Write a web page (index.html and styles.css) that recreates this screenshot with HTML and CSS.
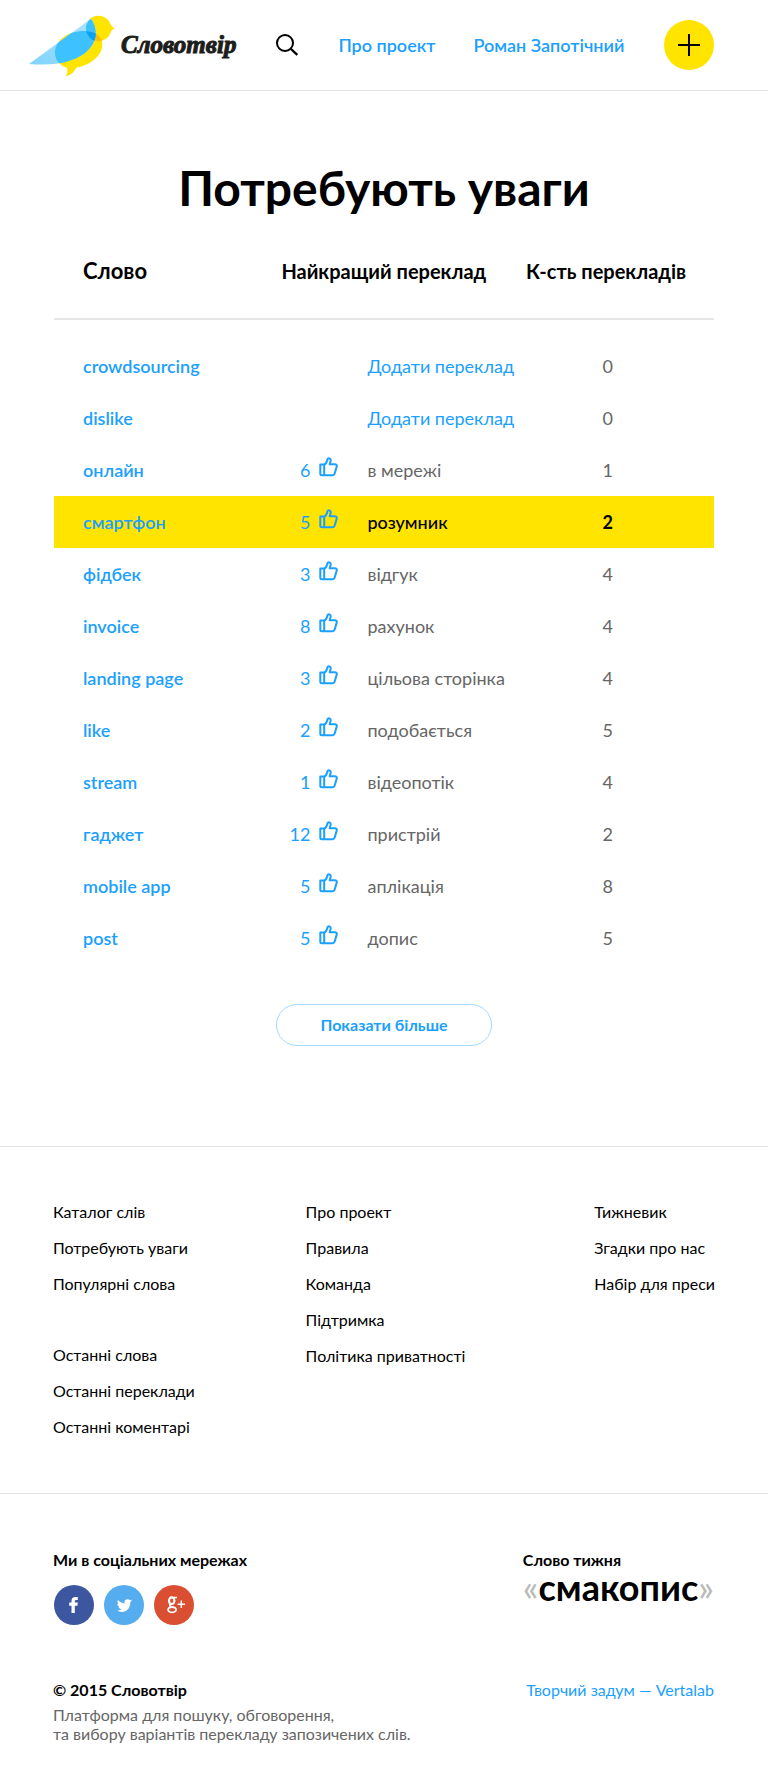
FILE: index.html
```
<!DOCTYPE html>
<html lang="uk">
<head>
<meta charset="utf-8">
<meta name="viewport" content="width=device-width, initial-scale=1">
<title>Потребують уваги — Словотвір</title>
<link rel="stylesheet" href="styles.css">
</head>
<body>
<svg class="sprite" aria-hidden="true">
  <symbol id="like" viewBox="0 0 20 20">
    <path d="M2.300 7.500h3.900v10.700H3.800a1.500 1.500 0 0 1-1.500-1.500zM6.200 8C8.500 6.500 9.200 4 9.700 1.800c1.700-1.200 3.500.200 2.900 2.300L11.700 7.300h5.100c1.500 0 2.300 1 1.900 2.300l-2 6.900c-.300 1.100-1 1.700-2.100 1.700H6.200" fill="none" stroke="currentColor" stroke-width="2" stroke-linejoin="round"/>
  </symbol>
</svg>

<header class="header">
  <a class="logo" href="#">
    <svg class="bird" width="88" height="62" viewBox="28 14 88 62" aria-hidden="true">
      <defs>
        <clipPath id="bodyClip"><path d="M55 53C55 40 68 31 84 31C92 31 102 34 102.300 44C102.500 57 88 66 76 67.700C75 71 71 75.500 65.700 76C68 73 67.500 70 66.700 67.500C60 66 55 60 55 53Z"/></clipPath>
        <clipPath id="headClip"><circle cx="98.700" cy="28.500" r="12.800"/></clipPath>
        <linearGradient id="wingFill" x1="0" x2="1" y1="1" y2="0"><stop offset="0" stop-color="#80d4ff"/><stop offset="1" stop-color="#aee4ff"/></linearGradient>
      </defs>
      <path d="M55 53C55 40 68 31 84 31C92 31 102 34 102.300 44C102.500 57 88 66 76 67.700C75 71 71 75.500 65.700 76C68 73 67.500 70 66.700 67.500C60 66 55 60 55 53Z" fill="#ffe400"/>
      <path d="M98.700 15.700c5.500 0 10.300 3.600 12 8.800 1 1.800 2.200 3 4.300 4-2.100.800-3.400 1.400-4.200 3.400A12.800 12.800 0 1 1 98.700 15.700Z" fill="#ffe400"/>
      <circle cx="98.700" cy="28.500" r="12.800" fill="#ffbd00" clip-path="url(#bodyClip)"/>
      <path d="M29 64L91 18.700C97 27 98 39 90 48C80 60 60 66.500 29 64Z" fill="url(#wingFill)"/>
      <path d="M29 64L91 18.700C97 27 98 39 90 48C80 60 60 66.500 29 64Z" fill="#3dc1ff" clip-path="url(#bodyClip)"/>
      <path d="M29 64L91 18.700C97 27 98 39 90 48C80 60 60 66.500 29 64Z" fill="#3dc1fa" clip-path="url(#headClip)"/>
      <g clip-path="url(#bodyClip)"><path d="M29 64L91 18.700C97 27 98 39 90 48C80 60 60 66.500 29 64Z" fill="#0aa3f0" clip-path="url(#headClip)"/></g>
    </svg>
    <span class="wordmark">Словотвір</span>
  </a>
  <button class="search" type="button" aria-label="Пошук">
    <svg width="22" height="22" viewBox="0 0 22 22" aria-hidden="true"><circle cx="9" cy="9" r="8" fill="none" stroke="#000" stroke-width="2"/><path d="M15 15l6.300 6" stroke="#000" stroke-width="2.400"/></svg>
  </button>
  <nav class="nav">
    <a href="#">Про проект</a>
    <a href="#">Роман Запотічний</a>
  </nav>
  <button class="add" type="button" aria-label="Додати слово">
    <svg width="22" height="22" viewBox="0 0 22 22" aria-hidden="true"><path d="M11 0v22M0 11h22" stroke="#000" stroke-width="2"/></svg>
  </button>
</header>

<main class="main">
  <h1>Потребують уваги</h1>
  <table class="words">
    <colgroup><col class="c-word"><col class="c-votes"><col class="c-best"><col class="c-count"></colgroup>
    <thead>
      <tr><th class="word-head" scope="col">Слово</th><th class="best-head" colspan="2" scope="colgroup">Найкращий переклад</th><th scope="col">К-сть перекладів</th></tr>
    </thead>
    <tbody>
      <tr><td><a class="word" href="#">crowdsourcing</a></td><td></td><td><a href="#">Додати переклад</a></td><td class="count">0</td></tr>
      <tr><td><a class="word" href="#">dislike</a></td><td></td><td><a href="#">Додати переклад</a></td><td class="count">0</td></tr>
      <tr><td><a class="word" href="#">онлайн</a></td><td><button class="vote" type="button">6<svg class="like"><use href="#like"/></svg></button></td><td>в мережі</td><td class="count">1</td></tr>
      <tr class="active"><td><a class="word" href="#">смартфон</a></td><td><button class="vote" type="button">5<svg class="like"><use href="#like"/></svg></button></td><td>розумник</td><td class="count">2</td></tr>
      <tr><td><a class="word" href="#">фідбек</a></td><td><button class="vote" type="button">3<svg class="like"><use href="#like"/></svg></button></td><td>відгук</td><td class="count">4</td></tr>
      <tr><td><a class="word" href="#">invoice</a></td><td><button class="vote" type="button">8<svg class="like"><use href="#like"/></svg></button></td><td>рахунок</td><td class="count">4</td></tr>
      <tr><td><a class="word" href="#">landing page</a></td><td><button class="vote" type="button">3<svg class="like"><use href="#like"/></svg></button></td><td>цільова сторінка</td><td class="count">4</td></tr>
      <tr><td><a class="word" href="#">like</a></td><td><button class="vote" type="button">2<svg class="like"><use href="#like"/></svg></button></td><td>подобається</td><td class="count">5</td></tr>
      <tr><td><a class="word" href="#">stream</a></td><td><button class="vote" type="button">1<svg class="like"><use href="#like"/></svg></button></td><td>відеопотік</td><td class="count">4</td></tr>
      <tr><td><a class="word" href="#">гаджет</a></td><td><button class="vote" type="button">12<svg class="like"><use href="#like"/></svg></button></td><td>пристрій</td><td class="count">2</td></tr>
      <tr><td><a class="word" href="#">mobile app</a></td><td><button class="vote" type="button">5<svg class="like"><use href="#like"/></svg></button></td><td>аплікація</td><td class="count">8</td></tr>
      <tr><td><a class="word" href="#">post</a></td><td><button class="vote" type="button">5<svg class="like"><use href="#like"/></svg></button></td><td>допис</td><td class="count">5</td></tr>
    </tbody>
  </table>
  <button class="more" type="button">Показати більше</button>
</main>

<footer>
  <nav class="links">
    <div class="column">
      <ul>
        <li><a href="#">Каталог слів</a></li>
        <li><a href="#">Потребують уваги</a></li>
        <li><a href="#">Популярні слова</a></li>
      </ul>
      <ul>
        <li><a href="#">Останні слова</a></li>
        <li><a href="#">Останні переклади</a></li>
        <li><a href="#">Останні коментарі</a></li>
      </ul>
    </div>
    <ul>
      <li><a href="#">Про проект</a></li>
      <li><a href="#">Правила</a></li>
      <li><a href="#">Команда</a></li>
      <li><a href="#">Підтримка</a></li>
      <li><a href="#">Політика приватності</a></li>
    </ul>
    <ul>
      <li><a href="#">Тижневик</a></li>
      <li><a href="#">Згадки про нас</a></li>
      <li><a href="#">Набір для преси</a></li>
    </ul>
  </nav>
  <div class="bottom">
    <div class="row">
      <section>
        <h2>Ми в соціальних мережах</h2>
        <div class="social">
          <a href="#" aria-label="Facebook"><svg viewBox="0 0 40 40"><circle cx="20" cy="20" r="20" fill="#3c569f"/><path d="M17.500 28v-7.300h-2.300v-3.100h2.300v-1.500c0-2.600 1.400-4.100 3.900-4.100h2.400v3.100h-1.500c-1.100 0-1.500.500-1.500 1.500v1h3l-.400 3.100h-2.600V28z" fill="#fff"/></svg></a>
          <a href="#" aria-label="Twitter"><svg viewBox="0 0 40 40"><circle cx="20" cy="20" r="20" fill="#55acee"/><path d="M27.800 15.600l-1.500 1.700C26.300 23.300 22.700 27 18 27c-1.900 0-3.600-.500-5-1.400 1.600.1 3.200-.300 4.500-1.300-1.300 0-2.500-.900-2.900-2.200h1.400c-1.500-.3-2.600-1.600-2.600-3.200l1.500.4c-1.500-1-1.800-2.800-1-4.300 1.700 2 3.900 3.200 6.500 3.400-.5-2.100 1-4.200 3.200-4.200.9 0 1.800.4 2.400 1l2-.8c-.2.800-.7 1.400-1.400 1.800z" fill="#fff"/></svg></a>
          <a href="#" aria-label="Google+"><svg viewBox="0 0 40 40"><circle cx="20" cy="20" r="20" fill="#da4f32"/><g fill="none" stroke="#fff"><ellipse cx="17.700" cy="15.700" rx="2.700" ry="3.300" stroke-width="2.200"/><path d="M16.800 18.800c-2 1.200-1 2.100.8 3.100" stroke-width="1.800"/><ellipse cx="18.100" cy="24.700" rx="4" ry="2.700" stroke-width="1.800"/><path d="M17.700 12.400h5.300M27.300 15.500v7.400M23.600 19.200H31" stroke-width="1.500"/></g></svg></a>
        </div>
      </section>
      <section>
        <h2>Слово тижня</h2>
        <a class="weekly" href="#"><span class="quote">«</span>смакопис<span class="quote">»</span></a>
      </section>
    </div>
    <div class="row">
      <div class="about">
        <strong>© 2015 Словотвір</strong>
        <p>Платформа для пошуку, обговорення,<br>та вибору варіантів перекладу запозичених слів.</p>
      </div>
      <a class="credit" href="#">Творчий задум — Vertalab</a>
    </div>
  </div>
</footer>
</body>
</html>
```
FILE: styles.css
```
* {
  box-sizing: border-box;
}

body {
  margin: 0;
  background: #fff;
  color: #000;
  font: 16px/20px Lato, "Open Sans", sans-serif;
}

a {
  color: #1ba0ff;
  text-decoration: none;
}

button {
  padding: 0;
  border: 0;
  background: none;
  font: inherit;
  cursor: pointer;
}

svg {
  display: block;
}

h1,
h2,
p,
ul {
  margin: 0;
  padding: 0;
}

ul {
  list-style: none;
}

.sprite {
  display: none;
}

.header {
  display: flex;
  align-items: center;
  gap: 40px;
  padding: 14px 54px 14px 28px;
  border-bottom: 1px solid #e5e5e5;
}

.logo {
  display: flex;
  align-items: center;
  gap: 5px;
  margin-right: auto;
  color: #1d1d1b;
}

.wordmark {
  font: italic bold 25px/32px "Liberation Serif", serif;
  -webkit-text-stroke: 1px #1d1d1b;
}

.nav {
  display: flex;
  gap: 38px;
  font-size: 18px;
  font-weight: 600;
  white-space: nowrap;
}

.add {
  display: grid;
  flex: none;
  place-items: center;
  width: 50px;
  height: 50px;
  border-radius: 50%;
  background: #ffe400;
}

.main {
  padding: 67px 54px 100px;
}

h1 {
  font-size: 48px;
  line-height: 60px;
  text-align: center;
}

.words {
  width: 100%;
  margin-bottom: 40px;
  border-collapse: collapse;
  table-layout: fixed;
  font-size: 18px;
}

.c-word {
  width: 34%;
}

.c-votes {
  width: 13.5%;
}

.c-best {
  width: 24%;
}

.words th {
  padding: 42px 0 36px;
  border-bottom: 2px solid #e5e5e5;
  font-size: 20px;
  font-weight: 700;
  line-height: 22px;
  text-align: left;
}

.words .word-head {
  padding-left: 29px;
  font-size: 22px;
}

.words .best-head {
  padding-left: 3px;
}

.words tbody::before {
  content: "";
  display: table-row;
  height: 21px;
}

.words td {
  height: 52px;
  padding: 0;
  color: #666;
}

.words td:first-child {
  padding-left: 29px;
}

.words .count {
  padding-right: 101px;
  text-align: right;
}

.words .active td {
  background: #ffe400;
  color: #000;
  font-weight: 500;
}

.words .active .count {
  font-weight: 700;
}

.words .word {
  font-weight: 600;
}

.vote {
  display: flex;
  align-items: center;
  justify-content: flex-end;
  gap: 8px;
  width: 100%;
  padding-right: 29px;
  color: #1ba0ff;
  font-weight: 400;
}

.like {
  width: 20px;
  height: 20px;
  margin-bottom: 6px;
}

.more {
  display: block;
  min-width: 216px;
  margin: 0 auto;
  padding: 10px 40px;
  border: 1px solid #a6daff;
  border-radius: 21px;
  color: #1ba0ff;
  font-weight: 700;
}

footer {
  border-top: 1px solid #e5e5e5;
}

.links {
  display: grid;
  grid-template-columns: 7fr 8fr auto;
  padding: 47px 53px 48px;
}

.links li {
  line-height: 36px;
}

.links a {
  color: #000;
}

.column {
  display: grid;
  gap: 35px;
}

.bottom {
  display: grid;
  gap: 55px;
  padding: 56px 54px 34px 53px;
  border-top: 1px solid #e5e5e5;
}

.row {
  display: flex;
  justify-content: space-between;
}

h2 {
  font-size: 16px;
  line-height: 20px;
}

.social {
  display: flex;
  gap: 10px;
  padding: 15px 1px 0;
}

.social svg {
  width: 40px;
  height: 40px;
}

.weekly {
  display: block;
  color: #000;
  font-size: 36px;
  font-weight: 700;
  line-height: 35px;
}

.quote {
  color: #bbb;
  font-weight: 500;
}

.about {
  line-height: 19px;
  color: #666;
}

.about strong {
  display: block;
  margin-bottom: 6px;
  color: #000;
}
```
